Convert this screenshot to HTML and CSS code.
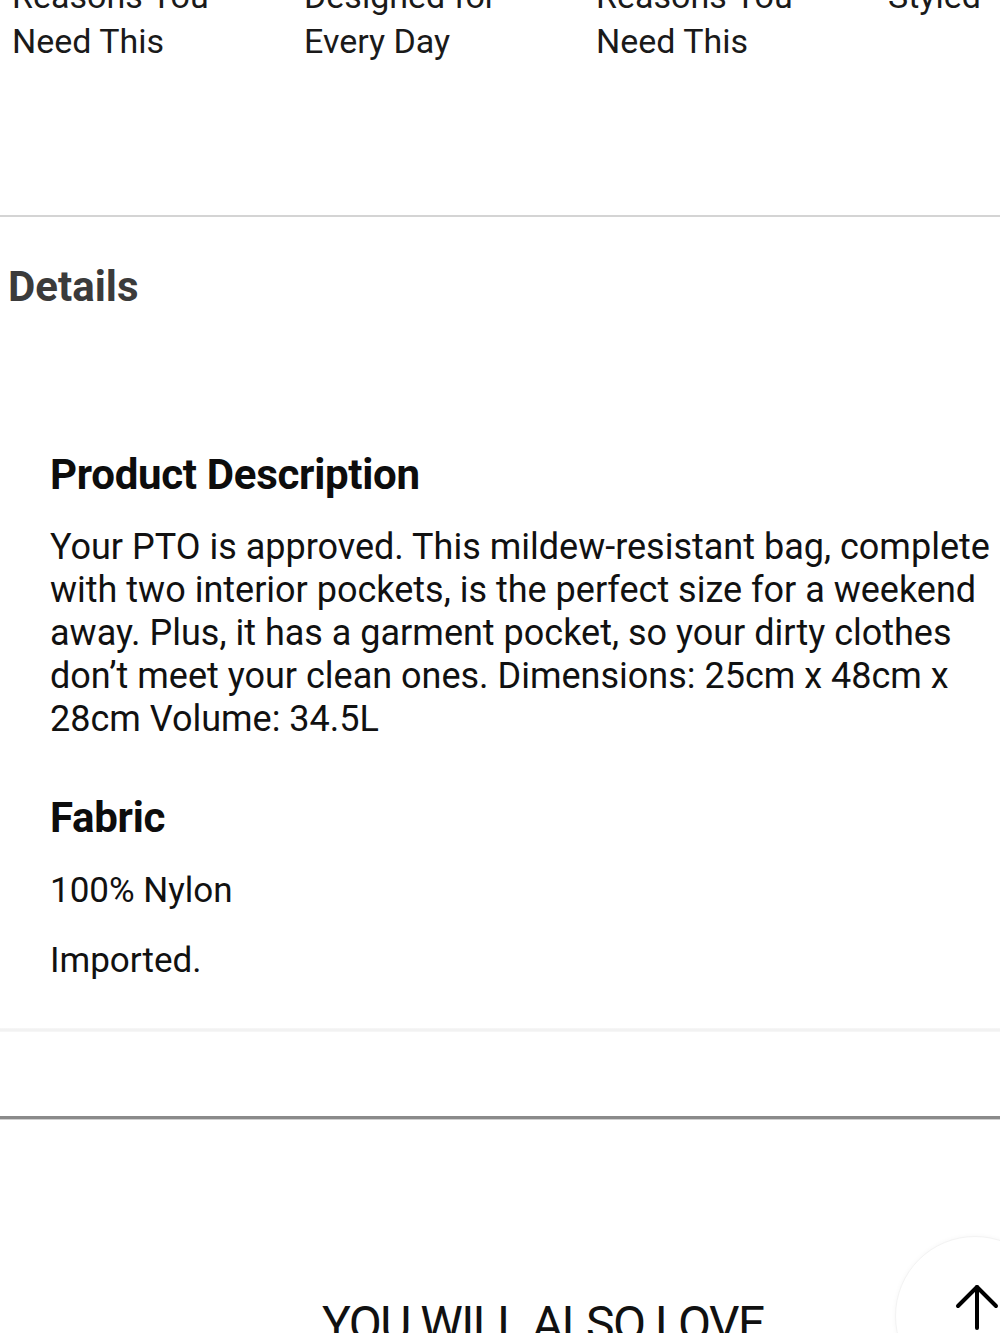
FILE: index.html
```html
<!DOCTYPE html>
<html lang="en">
<head>
<meta charset="utf-8">
<title>Details</title>
<link rel="stylesheet" href="styles.css">
</head>
<body>
<div class="page">
  <section class="reasons">
    <div class="reason">Reasons You<br>Need This</div>
    <div class="reason">Designed for<br>Every Day</div>
    <div class="reason">Reasons You<br>Need This</div>
    <div class="reason">Styled<br>&nbsp;</div>
  </section>
  <hr class="rule-light">
  <section class="details">
    <h2 class="details-title">Details</h2>
    <div class="details-body">
      <h3 class="sub-title">Product Description</h3>
      <p class="desc">Your PTO is approved. This mildew-resistant bag, complete with two interior pockets, is the perfect size for a weekend away. Plus, it has a garment pocket, so your dirty clothes don’t meet your clean ones. Dimensions: 25cm x 48cm x 28cm Volume: 34.5L</p>
      <h3 class="sub-title fabric-title">Fabric</h3>
      <p class="line">100% Nylon</p>
      <p class="line">Imported.</p>
    </div>
  </section>
  <div class="rule-faint"></div>
  <div class="rule-dark"></div>
  <section class="also">
    <h2 class="also-title">YOU WILL ALSO LOVE</h2>
  </section>
</div>
<button class="to-top" aria-label="Back to top">
  <svg width="44" height="46" viewBox="0 0 44 46" fill="none" stroke="#000" stroke-width="4" stroke-linecap="round" stroke-linejoin="round">
    <path d="M22 44 V3"/>
    <path d="M3 22 L22 3 L41 22"/>
  </svg>
</button>
</body>
</html>
```
FILE: styles.css
```css
html, body {
  margin: 0;
  padding: 0;
  background: #fff;
  overflow: hidden;
}
body {
  font-family: Roboto, "Liberation Sans", sans-serif;
  color: #111;
  width: 1000px;
  height: 1333px;
  position: relative;
}
.page {
  width: 1000px;
}
.reasons {
  display: grid;
  grid-template-columns: repeat(4, 292px);
  margin-top: -26px;
  padding-left: 12px;
  padding-bottom: 151px;
  font-size: 34px;
  line-height: 45px;
  color: #1a1a1a;
  white-space: nowrap;
}
.rule-light {
  margin: 0;
  border: 0;
  height: 2px;
  background: #d4d4d4;
}
.details {
  padding-top: 46px;
}
.details-title {
  margin: 0 0 0 8px;
  font-size: 42px;
  line-height: 48px;
  font-weight: 700;
  color: #3b3b3b;
}
.details-body {
  padding-left: 50px;
  width: 960px;
  padding-top: 140px;
  padding-bottom: 46px;
}
.sub-title {
  margin: 0;
  font-size: 42px;
  line-height: 48px;
  font-weight: 700;
  letter-spacing: -0.3px;
  color: #0d0d0d;
}
.desc {
  margin: 27px 0 0;
  font-size: 36px;
  line-height: 43px;
}
.fabric-title {
  margin-top: 53px;
}
.line {
  margin: 27px 0 0;
  font-size: 35px;
  line-height: 43px;
}
.rule-faint {
  height: 4px;
  background: linear-gradient(#f7f7f7, #f0f0f0, #f8f8f8);
}
.rule-dark {
  margin-top: 84px;
  height: 3px;
  background: #8a8a8a;
  border-bottom: 1px solid #d0d0d0;
}
.also {
  padding-top: 177px;
  padding-left: 322px;
}
.also-title {
  margin: 0;
  font-size: 48px;
  line-height: 54px;
  font-weight: 400;
  letter-spacing: -1.5px;
  white-space: nowrap;
}
.to-top {
  position: absolute;
  left: 895px;
  top: 1236px;
  width: 160px;
  height: 160px;
  border-radius: 50%;
  border: 1px solid #f3f3f3;
  background: #fff;
  box-shadow: 0 0 5px rgba(0,0,0,0.04);
  padding: 0;
  display: flex;
  align-items: flex-start;
  justify-content: flex-start;
}
.to-top svg {
  margin-left: 59px;
  margin-top: 47px;
}
```
